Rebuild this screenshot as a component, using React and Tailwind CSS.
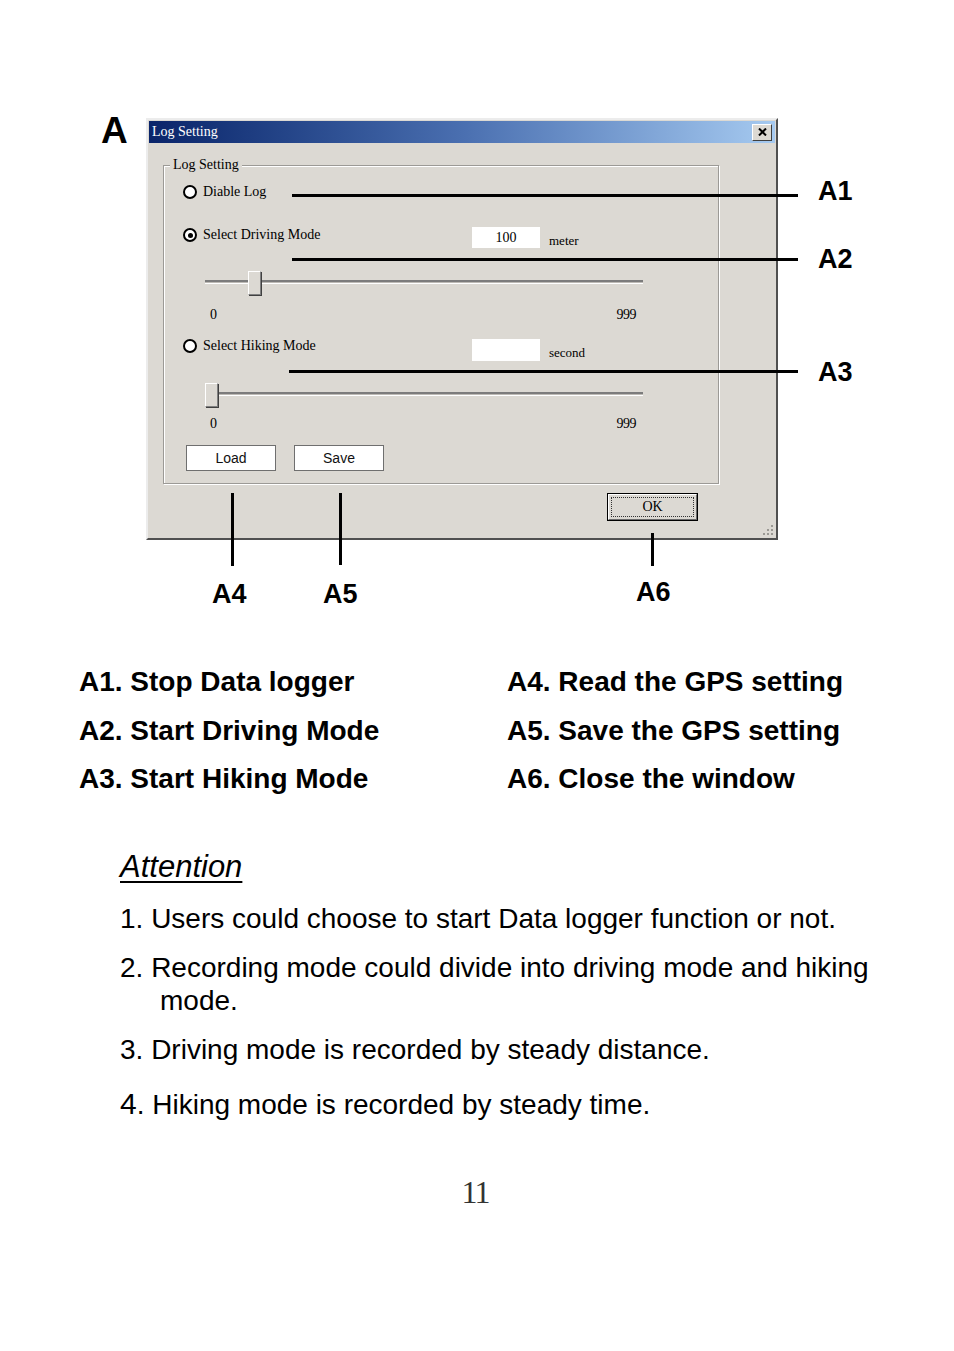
import React from "react";

const serif = { fontFamily: '"Liberation Serif", "DejaVu Serif", serif' };

const Radio = ({ checked, label }) => (
  <div className="flex items-center h-[16px] gap-[6px] text-[14px] text-black" style={serif}>
    <span className="w-[14px] h-[14px] rounded-full border-[2.5px] border-black bg-white flex items-center justify-center shrink-0">
      {checked && <span className="w-[5px] h-[5px] rounded-full bg-black" />}
    </span>
    <span className="leading-none">{label}</span>
  </div>
);

const Slider = ({ offset }) => (
  <div className="relative w-[438px] h-[24px] ml-[22px]">
    <div className="absolute left-0 right-0 top-[9px] h-[4px] border-t-2 border-t-[#7c7c7c] border-b border-b-white bg-[#bdbab5]" />
    <div
      className="absolute top-0 w-[13px] h-[24px] bg-[#dcd9d3] border border-t-white border-l-white border-r-[#808080] border-b-[#808080] shadow-[1px_1px_0_#404040]"
      style={{ left: offset }}
    />
  </div>
);

const Scale = ({ className }) => (
  <div className={`flex justify-between w-[426px] ml-[27px] h-[16px] items-center text-[14px] leading-none ${className}`} style={serif}>
    <span>0</span>
    <span className="tracking-[-0.5px]">999</span>
  </div>
);

const WinButton = ({ children, className }) => (
  <div className={`w-[90px] h-[26px] bg-white border border-[#6f6f6f] flex items-center justify-center text-[14px] text-[#111] ${className}`}>
    {children}
  </div>
);

const Line = ({ className }) => <div className={`absolute bg-black ${className}`} />;

const Label = ({ children, className }) => (
  <div className={`absolute font-bold text-[27px] leading-none text-black ${className}`}>{children}</div>
);

export default function App() {
  return (
    <div className="relative w-[954px] h-[1351px] bg-white overflow-hidden text-black" style={{ fontFamily: '"Liberation Sans", Arial, sans-serif' }}>
      {/* figure */}
      <div className="relative h-[640px] pt-[118px] pl-[146px]">
        <div className="relative w-[632px] h-[422px] bg-[#dcd9d3] border-2 border-t-[#ececec] border-l-[#ececec] border-r-[#505050] border-b-[#505050] px-[1px] pt-[1px]">
          {/* title bar */}
          <div className="h-[22px] flex items-center justify-between pl-[3px] pr-[3px] bg-gradient-to-r from-[#0a246a] via-[#4a6fb0] to-[#a6caf0]">
            <span className="text-white text-[14px] leading-none" style={serif}>Log Setting</span>
            <div className="w-[20px] h-[17px] bg-[#dcd9d3] border border-t-white border-l-white border-r-[#404040] border-b-[#404040] flex items-center justify-center">
              <svg width="9" height="8" viewBox="0 0 9 8">
                <path d="M1 0.5 L8 7.5 M8 0.5 L1 7.5" stroke="#000" strokeWidth="2" />
              </svg>
            </div>
          </div>

          {/* group box */}
          <div className="relative mt-[22px] ml-[14px] w-[556px] h-[319px] border border-[#9c9a96] shadow-[inset_1px_1px_0_#fff,1px_1px_0_#fff] pl-[19px]">
            <span className="absolute left-[6px] -top-[9px] px-[3px] bg-[#dcd9d3] text-[14px] leading-[16px]" style={serif}>
              Log Setting
            </span>

            <div className="mt-[18px]">
              <Radio label="Diable Log" />
            </div>

            <div className="mt-[27px] flex items-start">
              <div className="w-[289px]">
                <Radio checked label="Select Driving Mode" />
              </div>
              <div className="w-[68px] h-[21px] bg-white flex items-center justify-center text-[14px] leading-none" style={serif}>100</div>
              <span className="ml-[9px] mt-[7px] text-[13px] leading-none" style={serif}>meter</span>
            </div>

            <div className="mt-[23px]">
              <Slider offset={43} />
            </div>
            <Scale className="mt-[12px]" />

            <div className="mt-[15px] flex items-start">
              <div className="w-[289px]">
                <Radio label="Select Hiking Mode" />
              </div>
              <div className="mt-[1px] w-[68px] h-[22px] bg-white" />
              <span className="ml-[9px] mt-[8px] text-[13px] leading-none" style={serif}>second</span>
            </div>

            <div className="mt-[22px]">
              <Slider offset={0} />
            </div>
            <Scale className="mt-[9px]" />

            <div className="mt-[13px] flex ml-[3px]">
              <WinButton>Load</WinButton>
              <WinButton className="ml-[18px]">Save</WinButton>
            </div>
          </div>

          {/* OK */}
          <div className="mt-[9px] ml-[458px] w-[91px] h-[28px] border border-black bg-[#dcd9d3]">
            <div className="w-full h-full border border-t-white border-l-white border-r-[#6a6a6a] border-b-[#6a6a6a] p-[2px]">
              <div className="w-full h-full border border-dotted border-[#333] flex items-center justify-center text-[14px] leading-none" style={serif}>
                OK
              </div>
            </div>
          </div>

          {/* resize grip */}
          <svg className="absolute right-[2px] bottom-[2px]" width="12" height="12" viewBox="0 0 12 12">
            {[[9, 1], [9, 5], [5, 5], [9, 9], [5, 9], [1, 9]].map(([x, y], i) => (
              <rect key={i} x={x} y={y} width="2" height="2" fill="#9a9893" />
            ))}
          </svg>
        </div>

        {/* annotations */}
        <Label className="left-[101px] top-[112px] text-[37px]">A</Label>

        <Line className="left-[292px] top-[194px] w-[506px] h-[3px]" />
        <Line className="left-[292px] top-[258px] w-[506px] h-[3px]" />
        <Line className="left-[289px] top-[370px] w-[509px] h-[3px]" />
        <Line className="left-[231px] top-[493px] w-[3px] h-[73px]" />
        <Line className="left-[339px] top-[493px] w-[3px] h-[72px]" />
        <Line className="left-[651px] top-[533px] w-[3px] h-[33px]" />

        <Label className="left-[818px] top-[178px]">A1</Label>
        <Label className="left-[818px] top-[246px]">A2</Label>
        <Label className="left-[818px] top-[359px]">A3</Label>
        <Label className="left-[212px] top-[581px]">A4</Label>
        <Label className="left-[323px] top-[581px]">A5</Label>
        <Label className="left-[636px] top-[579px]">A6</Label>
      </div>

      {/* legend */}
      <div className="mt-[18px] grid grid-cols-[428px_1fr] pl-[79px] font-bold text-[28px] leading-[48.5px]">
        <div>A1. Stop Data logger</div>
        <div>A4. Read the GPS setting</div>
        <div>A2. Start Driving Mode</div>
        <div>A5. Save the GPS setting</div>
        <div>A3. Start Hiking Mode</div>
        <div>A6. Close the window</div>
      </div>

      {/* attention */}
      <div className="pl-[120px] pr-[40px]">
        <div className="mt-[43px] italic underline underline-offset-[4px] decoration-[2px] text-[31px] leading-[40px]">Attention</div>
        <div className="text-[28px] leading-[33px]">
          <p className="mt-[15px]">1. Users could choose to start Data logger function or not.</p>
          <p className="mt-[16px]">
            2. Recording mode could divide into driving mode and hiking
            <br />
            <span className="pl-[40px]">mode.</span>
          </p>
          <p className="mt-[16px]">3. Driving mode is recorded by steady distance.</p>
          <p className="mt-[21px]">
            <span className="text-[30px]">4</span>. Hiking mode is recorded by steady time.
          </p>
        </div>
      </div>

      {/* page number */}
      <div className="mt-[51px] flex justify-center">
        <span className="text-[32px] leading-[40px] text-[#333] tracking-[-2px] pl-[2px] mr-[6px]" style={serif}>
          11
        </span>
      </div>
    </div>
  );
}
